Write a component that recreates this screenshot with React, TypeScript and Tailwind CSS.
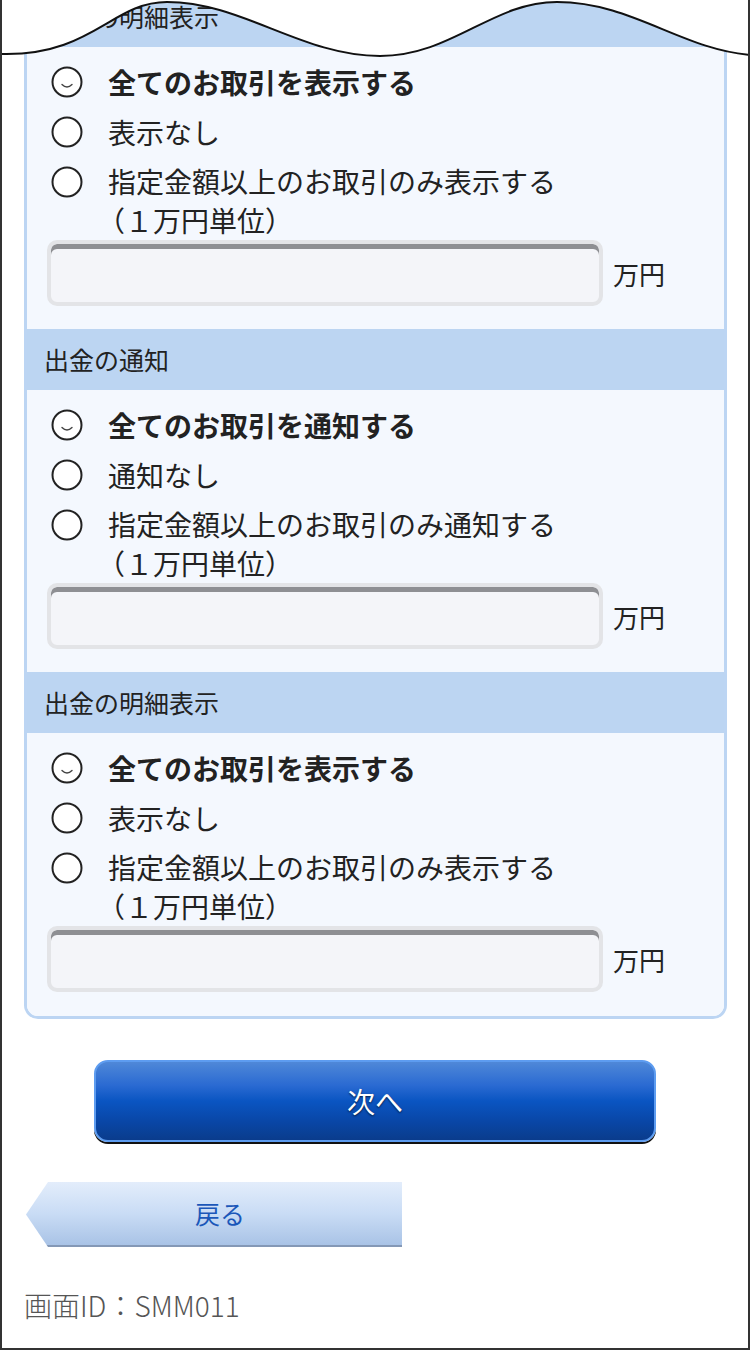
import React from 'react'

type Section = {
  title: string
  options: [string, string, string]
}

const sections: Section[] = [
  {
    title: '入金の明細表示',
    options: ['全てのお取引を表示する', '表示なし', '指定金額以上のお取引のみ表示する'],
  },
  {
    title: '出金の通知',
    options: ['全てのお取引を通知する', '通知なし', '指定金額以上のお取引のみ通知する'],
  },
  {
    title: '出金の明細表示',
    options: ['全てのお取引を表示する', '表示なし', '指定金額以上のお取引のみ表示する'],
  },
]

const WAVE = 'M0 54 C90 56 110 2 165 2 C240 2 300 56 378 56 C450 56 490 2 555 2 C630 2 680 50 750 55'

function Radio({ checked }: { checked?: boolean }) {
  return (
    <svg width="32" height="32" viewBox="0 0 32 32" className="shrink-0">
      <circle cx="16" cy="16" r="14.5" fill="#ffffff" stroke="#222222" strokeWidth="2" />
      {checked && (
        <path d="M11 18.5 Q16 23.5 21 18.5" fill="none" stroke="#444444" strokeWidth="1.4" strokeLinecap="round" />
      )}
    </svg>
  )
}

function SectionBlock({ section, last }: { section: Section; last?: boolean }) {
  const [all, none, amount] = section.options
  return (
    <div>
      <div className="h-[61px] bg-[#bcd5f2] pl-[17px] flex items-center text-[25px] text-[#222]">
        {section.title}
      </div>
      <div className={`bg-[#f4f8fe] pt-[10px] ${last ? 'pb-[24px]' : 'pb-[23px]'}`}>
        <div className="h-[50px] flex items-center pl-[24px]">
          <Radio checked />
          <span className="ml-[25px] text-[28px] font-bold text-[#222]">{all}</span>
        </div>
        <div className="h-[50px] flex items-center pl-[24px]">
          <Radio />
          <span className="ml-[25px] text-[28px] text-[#222]">{none}</span>
        </div>
        <div className="flex items-start pl-[24px] pt-[5px]">
          <div className="h-[39px] flex items-center">
            <Radio />
          </div>
          <div className="ml-[25px] text-[28px] leading-[39px] text-[#222]">
            <div>{amount}</div>
            <div className="-ml-[11px]">（１万円単位）</div>
          </div>
        </div>
        <div className="flex items-center pl-[20px]">
          <div className="w-[556px] h-[66px] rounded-[10px] border-4 border-[#e3e4e7] bg-[#f4f5f9] shadow-[inset_0_5px_0_#8e8f93]" />
          <span className="ml-[10px] text-[26px] text-[#222]">万円</span>
        </div>
      </div>
    </div>
  )
}

export default function App() {
  return (
    <div className="relative w-[750px] h-[1350px] overflow-hidden bg-white border-x-2 border-b-2 border-[#333] font-['Noto_Sans_CJK_JP','Noto_Sans',sans-serif]">
      <div className="-mt-[14px] ml-[22px] mr-[21px] border-[3px] border-t-0 border-[#bcd5f3] rounded-b-[14px] overflow-hidden">
        {sections.map((s, i) => (
          <SectionBlock key={i} section={s} last={i === sections.length - 1} />
        ))}
      </div>

      <button className="mt-[41px] mx-auto flex items-center justify-center w-[562px] h-[82px] rounded-[14px] border-2 border-[#5d9cf0] bg-[linear-gradient(to_bottom,#4f88d8_0%,#2a6ad2_30%,#0a55c2_50%,#0947a8_75%,#0a3c8c_100%)] shadow-[0_2px_0_#111] text-white text-[28px] [text-shadow:0_1px_2px_rgba(0,0,0,0.7)]">
        次へ
      </button>

      <div className="mt-[40px] ml-[24px] w-[376px] h-[65px] [clip-path:polygon(22px_0,100%_0,100%_100%,22px_100%,0_50%)] bg-[linear-gradient(to_bottom,#e3edfb_0%,#c9dcf5_50%,#a9c3e6_100%)] border-b-2 border-[#8498b6] flex items-center justify-center pl-[12px] text-[25px] text-[#1b57b9]">
        戻る
      </div>

      <div className="mt-[42px] ml-[22px] text-[28px] font-light text-[#555] leading-[32px]">画面ID：SMM011</div>

      {/* wavy torn edge over the top */}
      <svg className="absolute top-0 left-0 z-10" width="750" height="60" viewBox="0 0 750 60">
        <path d={`M0 0 L${WAVE.slice(1)} L750 0 Z`} fill="#ffffff" />
        <path d={WAVE} fill="none" stroke="#111" strokeWidth="2" />
      </svg>
    </div>
  )
}
